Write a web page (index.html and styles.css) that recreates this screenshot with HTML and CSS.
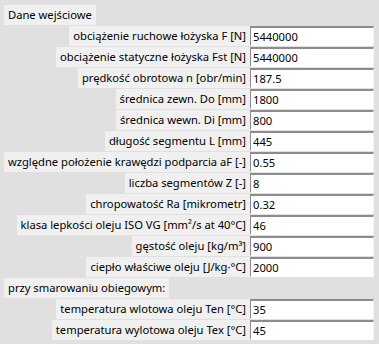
FILE: index.html
```html
<!DOCTYPE html>
<html lang="pl">
<head>
	<meta charset="UTF-8">
	<title>Dane wejściowe</title>
	<link rel="stylesheet" href="styles.css">
</head>
<body>
	<div class="form">
		<span class="lbl head">Dane wejściowe</span>
		<span class="blank"></span>

		<span class="lbl">obciążenie ruchowe łożyska F [N]</span>
		<input class="entry" type="text" value="5440000">
		<span class="lbl">obciążenie statyczne łożyska Fst [N]</span>
		<input class="entry" type="text" value="5440000">
		<span class="lbl">prędkość obrotowa n [obr/min]</span>
		<input class="entry" type="text" value="187.5">
		<span class="lbl">średnica zewn. Do [mm]</span>
		<input class="entry" type="text" value="1800">
		<span class="lbl">średnica wewn. Di [mm]</span>
		<input class="entry" type="text" value="800">
		<span class="lbl">długość segmentu L [mm]</span>
		<input class="entry" type="text" value="445">
		<span class="lbl">względne położenie krawędzi podparcia aF [-]</span>
		<input class="entry" type="text" value="0.55">
		<span class="lbl">liczba segmentów Z [-]</span>
		<input class="entry" type="text" value="8">
		<span class="lbl">chropowatość Ra [mikrometr]</span>
		<input class="entry" type="text" value="0.32">
		<span class="lbl">klasa lepkości oleju ISO VG [mm²/s at 40°C]</span>
		<input class="entry" type="text" value="46">
		<span class="lbl">gęstość oleju [kg/m³]</span>
		<input class="entry" type="text" value="900">
		<span class="lbl">ciepło właściwe oleju [J/kg·°C]</span>
		<input class="entry" type="text" value="2000">

		<span class="lbl head">przy smarowaniu obiegowym:</span>
		<span class="blank"></span>

		<span class="lbl">temperatura wlotowa oleju Ten [°C]</span>
		<input class="entry" type="text" value="35">
		<span class="lbl">temperatura wylotowa oleju Tex [°C]</span>
		<input class="entry" type="text" value="45">
	</div>
</body>
</html>
```
FILE: styles.css
```css
* {
	margin: 0;
	padding: 0;
	box-sizing: border-box;
}
html,body {
	height: 100%;
}
body {
	background: #e0e0e0;
	font-family: "Noto Sans", "Open Sans", sans-serif;
	font-size: 11.2px;
	color: #000;
}
.form {
	display: grid;
	grid-template-columns: 246px 124px;
	grid-auto-rows: 20px;
	row-gap: 1px;
	padding: 5px 0 0 4px;
}
.lbl {
	justify-self: end;
	height: 20px;
	padding: 0 4px;
	background: #f0f0f0;
	line-height: 20px;
	white-space: nowrap;
}
.lbl.head {
	justify-self: start;
}
.entry {
	width: 124px;
	height: 20px;
	padding: 0 2px;
	background: #fff;
	border-style: solid;
	border-width: 2px 1px 1px 1px;
	border-color: #8c8c8c #f4f4f4 #fff #8c8c8c;
	font-family: inherit;
	font-size: 11.2px;
	color: #000;
	outline: none;
}
```
